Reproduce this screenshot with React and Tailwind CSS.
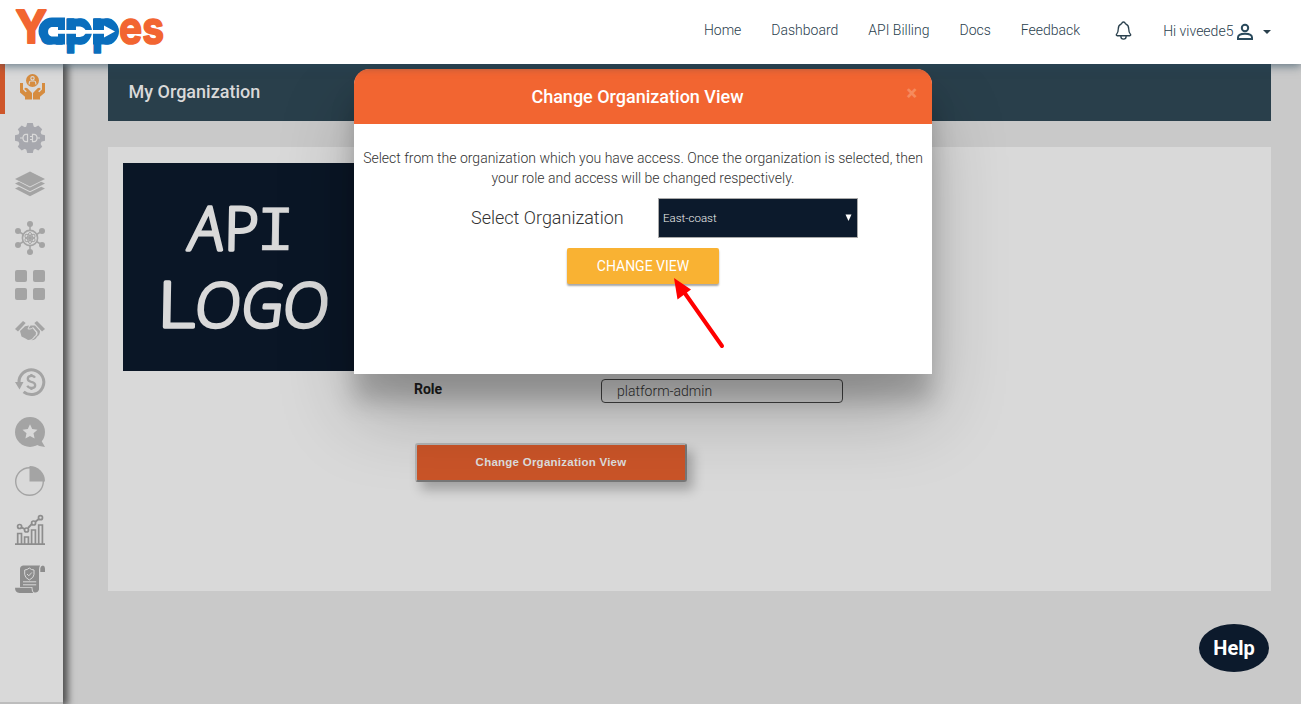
import React from "react";
import { IoNotificationsOutline } from "react-icons/io5";

const links = ["Home", "Dashboard", "API Billing", "Docs", "Feedback"];

function Logo() {
  return (
    <svg width="152" height="50" viewBox="14 6 152 50" className="overflow-visible" fontFamily="Inter, 'Liberation Sans', sans-serif" fontWeight="700">
      <g strokeLinejoin="round">
        <text x="15.5" y="43" fontSize="45.5" fill="#f26531" stroke="#f26531" strokeWidth="2" textLength="31.5" lengthAdjust="spacingAndGlyphs">Y</text>
        <text x="40" y="44" fontSize="46" fill="#0a6ebd" stroke="#0a6ebd" strokeWidth="1.6" textLength="78.5" lengthAdjust="spacingAndGlyphs">app</text>
        <text x="119" y="43.5" fontSize="46" fill="#f26531" stroke="#f26531" strokeWidth="1.6" textLength="45" lengthAdjust="spacingAndGlyphs">es</text>
      </g>
      <g fill="#0a6ebd">
        <path d="M52 17.5H65V44.5H52A13.5 13.5 0 0 1 52 17.5Z" />
        <path d="M66.5 18.5H79A12.8 12.8 0 0 1 79 44.5H66.5Z" />
        <path d="M93 18.5H106A13 13 0 0 1 106 44.5H93Z" />
      </g>
      <path d="M65.6 17V28M65.6 35V46" stroke="#fff" strokeWidth="0.6" />
      <path d="M58 30V27H51.5A5 5 0 0 0 51.5 36.5H58V33.7H76V37H80Q84 36.5 85.5 33.7H104V37.5L115 31.5L104 25.5V30H85.5Q84 27 80 26.5H76V30Z" fill="#fff" />
    </svg>
  );
}

function Icon({ className = "", children }) {
  return (
    <svg width="30" height="34" viewBox="0 0 30 34" className={`shrink-0 overflow-visible ${className}`} fill="currentColor">
      {children}
    </svg>
  );
}

const bg = "#d9d9d9";

function Sidebar() {
  return (
    <aside className="relative z-10 flex w-[63px] shrink-0 flex-col border-b-2 border-[#bdbdbd] bg-[#d9d9d9] shadow-[3px_0_7px_2px_rgba(0,0,0,0.6)]">
      <div className="flex h-[50px]">
        <div className="w-[5px] bg-[#ce562a]" />
        <div className="pt-1.5 pl-2.5 text-[#d68c3f]">
          <Icon>
            <circle cx="17.5" cy="10.5" r="6.5" />
            <circle cx="17.5" cy="8.3" r="1.7" fill="none" stroke={bg} strokeWidth="1.1" />
            <path d="M14.2 14.6V13Q14.2 11 16 11H19Q20.8 11 20.8 13V14.6" fill="none" stroke={bg} strokeWidth="1.1" />
            <path d="M5 13H8V19.5L10.7 22.3L11.8 21.3L9.2 18.9Q10.4 17 12.4 18.2L17 23V29.5H10V26.8L5 22.4Z" />
            <path d="M30 13H27V19.5L24.3 22.3L23.2 21.3L25.8 18.9Q24.6 17 22.6 18.2L18 23V29.5H25V26.8L30 22.4Z" />
          </Icon>
        </div>
      </div>
      <nav className="flex flex-col pt-[7px] pl-[15px] text-[#a4a4a4]">
        <Icon className="text-[#a7a8ae]">
          <circle cx="15" cy="17" r="12" />
          <path d="M12.2 2h5.6l1.3 5h-8.2zM12.2 32h5.6l1.3-5h-8.2zM0 14.2v5.6l5 1.3v-8.2zM30 14.2v5.6l-5 1.3v-8.2zM2.8 8.3l3.9-3.9 4.5 2.6-5.8 5.8zM27.2 8.3l-3.9-3.9-4.5 2.6 5.8 5.8zM2.8 25.7l3.9 3.9 4.5-2.6-5.8-5.8zM27.2 25.7l-3.9 3.9-4.5-2.6 5.8-5.8z" />
          <path d="M5 17h3M12.5 13.3h-1.5Q8 13.5 8 17t3 3.7h1.5zM17.5 13.3h1.5Q22 13.5 22 17t-3 3.7h-1.5zM15 15.5h2.5M15 18.5h2.5M22 17h3" fill="none" stroke={bg} strokeWidth="1.2" />
        </Icon>
        <Icon className="mt-3">
          <path d="M15 4.5L30 12L15 19.5L0 12Z" />
          <path d="M0 16.5L3.8 14.8L15 20.5L26.2 14.8L30 16.5L15 24.2Z" />
          <path d="M0 21.5L3.8 19.7L15 25.3L26.2 19.7L30 21.5L15 29.3Z" />
        </Icon>
        <Icon className="mt-5">
          <g fill="none" stroke="currentColor">
            <circle cx="15" cy="17" r="7.6" strokeWidth="1.6" />
            <path d="M15 5V9M15 25V29M4.5 11L8.5 13.5M21.5 20.5L25.5 23M4.5 23L8.5 20.5M21.5 13.5L25.5 11" strokeWidth="1.5" />
            <ellipse cx="15" cy="17" rx="2.4" ry="5.6" />
            <ellipse cx="15" cy="17" rx="2.4" ry="5.6" transform="rotate(60 15 17)" />
            <ellipse cx="15" cy="17" rx="2.4" ry="5.6" transform="rotate(120 15 17)" />
          </g>
          <circle cx="15" cy="17" r="2" />
          <circle cx="15" cy="3" r="3" /><circle cx="15" cy="31" r="3" />
          <circle cx="3" cy="10" r="3" /><circle cx="27" cy="10" r="3" />
          <circle cx="3" cy="24" r="3" /><circle cx="27" cy="24" r="3" />
        </Icon>
        <Icon className="mt-[13px]">
          <rect x="0" y="2" width="12" height="12" rx="2" /><rect x="18" y="2" width="12" height="12" rx="2" />
          <rect x="0" y="20" width="12" height="12" rx="2" /><rect x="18" y="20" width="12" height="12" rx="2" />
        </Icon>
        <Icon className="mt-3">
          <path d="M0 15L8 7L10.7 9L3 17.5Z" />
          <path d="M30 15L22 7L19.3 9L27 17.5Z" />
          <path d="M5 17L10 12.3L14 11.5L12.5 15Q15.5 16.5 17.5 14.3L21 18.5Q21.5 21 19 22.5Q17 26 13 26L10.5 24.5L6.5 22.5Z" />
          <path d="M13.5 14.3L15.5 11.5H20L25 17Q25 21 22 22.7Q20.5 25.8 16.5 26.2Q19.4 24.7 20.3 22.8Q23.5 20.8 22.3 17.8L18 13Q16 15.3 13.5 14.3Z" />
        </Icon>
        <Icon className="mt-[17px]">
          <path d="M4 18A12.4 12.4 0 1 1 8.6 26.8" fill="none" stroke="currentColor" strokeWidth="3" />
          <path d="M0 17H8.5L4.5 24.5Z" />
          <path d="M20 12.6Q19 10.9 16.3 10.9Q12.8 10.9 12.8 13.7Q12.8 16 16.3 16.8Q20.2 17.6 20.2 20.2Q20.2 23 16.5 23Q13.5 23 12.3 20.8M16.4 9V11.5M16.4 22.6V25" fill="none" stroke="currentColor" strokeWidth="2.3" />
        </Icon>
        <Icon className="mt-4">
          <circle cx="15" cy="17" r="15" />
          <path d="M20 29L26 25L30 32Q25 32 20 29Z" />
          <path d="M15 9.2L17.2 14.1L22.5 14.7L18.5 18.3L19.6 23.6L15 20.9L10.4 23.6L11.5 18.3L7.5 14.7L12.8 14.1Z" fill={bg} />
        </Icon>
        <Icon className="mt-[15px]">
          <circle cx="14.5" cy="17.5" r="13.8" fill="none" stroke="currentColor" strokeWidth="1.4" />
          <path d="M14.5 2A15 15 0 0 1 30 17.5H14.5Z" />
        </Icon>
        <Icon className="mt-[15px] text-[#8d8d8d]">
          <g fill="none" stroke="currentColor" strokeWidth="1.7">
            <path d="M0 31.2H30M2.7 31V20.5H6.5V31M9.6 31V24H13.4V31M16.6 31V17H20.4V31M23.7 31V12H27.4V31" />
            <path d="M6.3 14.3L9.7 16M13 15L16.7 11.2M20.4 8.7L23.8 6" strokeWidth="1.9" />
            <circle cx="4.6" cy="13.5" r="2" /><circle cx="11.5" cy="17" r="2" /><circle cx="18.6" cy="10" r="2" /><circle cx="25.5" cy="4.7" r="2" />
          </g>
        </Icon>
        <Icon className="mt-[15px] text-[#8d8d8d]">
          <path d="M8 3.5H25Q24 5 24 8V27.5Q23 31 19.5 30.5Q17.5 30 17.4 25H5V7Q5 4 8 3.5Z" />
          <path d="M25.3 10V6Q25.8 3.5 28 3.5Q30 4 30 6.5V10Z" />
          <path d="M0 25.8H16.5Q16.5 29.5 18.3 31H4.5Q0 30.6 0 25.8Z" />
          <path d="M14.3 6Q16.5 8 19 8V12.5Q19 15.5 14.3 18Q9.7 15.5 9.7 12.5V8Q12.2 8 14.3 6ZM12 12L13.8 13.8L16.8 10.5M8 19.8H21.2M8 22.8H21.2" fill="none" stroke={bg} strokeWidth="1" />
        </Icon>
      </nav>
    </aside>
  );
}

function ApiArtwork() {
  return (
    <svg width="262" height="208" viewBox="0 0 262 208" className="block bg-[#0a1626]" fontFamily="'Open Sans', sans-serif" fill="#d9d9d9" stroke="#d9d9d9" strokeWidth="3.4" strokeLinejoin="round" fontWeight="300">
      <text transform="translate(64 87) skewX(-7) scale(.96 1)" fontSize="60">A</text>
      <text transform="translate(101 87) skewX(-1) scale(.98 1)" fontSize="60">P</text>
      <text transform="translate(133 87) skewX(-1) scale(1.1 1)" fontFamily="'DejaVu Sans Mono', monospace" fontSize="58" strokeWidth="0.6">I</text>
      <text transform="translate(34.5 164) skewX(-1) scale(1.15 1)" fontSize="63">L</text>
      <text transform="translate(70 164) skewX(-7) scale(.98 1)" fontSize="61">O</text>
      <text transform="translate(116.5 164) skewX(-7) scale(.95 1)" fontSize="61">G</text>
      <text transform="translate(158 164) skewX(-7) scale(.98 1)" fontSize="61">O</text>
    </svg>
  );
}

function Modal() {
  return (
    <div className="absolute top-[69px] left-[354px] z-20 h-[305px] w-[578px] rounded-t-[16px] bg-white shadow-[0_27px_24px_0_rgba(0,0,0,0.2),0_40px_77px_0_rgba(0,0,0,0.22)]">
      <div className="relative flex h-[55px] items-center justify-center rounded-t-[15px] bg-[#f26531] pr-[11px] text-[18px] font-medium text-white">
        Change Organization View
        <span className="absolute top-[13px] right-[15px] text-[20px] leading-[22px] font-black text-[#f68a5d]">×</span>
      </div>
      <p className="pt-6 text-center text-[14px] leading-5 font-light text-[#333]">
        Select from the organization which you have access. Once the organization is selected, then<br />
        your role and access will be changed respectively.
      </p>
      <div className="mt-[10px] flex h-10 items-center pl-[117px]">
        <span className="w-[187px] pb-0.5 text-[18px] font-light text-[#333]">Select Organization</span>
        <div className="flex h-10 w-[200px] items-center justify-between border border-[#a9a9a9] bg-[#0c1a2c] pr-[5px] pl-1 text-[11.5px] font-light text-[#f0f0f0]">
          <span className="pt-0.5">East-coast</span>
          <svg width="7" height="7" viewBox="0 0 7 7" className="mb-0.5" fill="#fff"><path d="M.5 .5H6.5L3.5 7Z" /></svg>
        </div>
      </div>
      <div className="flex justify-center pt-[10px]">
        <button className="h-9 w-[152px] rounded-[2px] bg-[#f9b233] text-[14px] text-white shadow-[0_2px_2px_rgba(0,0,0,0.35)]">CHANGE VIEW</button>
      </div>
      <svg width="54" height="72" viewBox="0 0 54 72" className="absolute top-[208px] left-[319px]">
        <path d="M11 15L49 69" stroke="#f00" strokeWidth="4" strokeLinecap="round" />
        <path d="M1 1L18 12.5L4.5 22.5Z" fill="#f00" />
      </svg>
    </div>
  );
}

export default function App() {
  return (
    <div className="relative flex h-[704px] w-[1301px] flex-col overflow-hidden bg-[#c9c9c9] font-['Roboto',sans-serif]">
      <header className="relative z-30 flex h-16 shrink-0 items-center justify-between bg-white pr-[30px] pl-[14px] text-[#2a404d] shadow-[0_2px_9px_rgba(40,70,90,0.65)]">
        <div className="pb-[2px]"><Logo /></div>
        <div className="flex items-center pb-1 text-[14px] font-light">
          <nav className="flex gap-[30px]">
            {links.map((l) => <a key={l}>{l}</a>)}
          </nav>
          <IoNotificationsOutline className="ml-[33px] size-[21px]" />
          <span className="mt-0.5 ml-[29px]">Hi viveede5</span>
          <svg width="18" height="18" viewBox="0 0 18 18" className="mt-1 ml-[3px]" fill="none" stroke="#2a4a5c" strokeWidth="2">
            <circle cx="9" cy="5" r="3.2" />
            <path d="M2 16V14.5Q2 10.8 9 10.8T16 14.5V16Z" />
          </svg>
          <svg width="8" height="4" viewBox="0 0 8 4" className="mt-1 ml-[8.6px]" fill="#2a404d"><path d="M0 0H8L4 4Z" /></svg>
        </div>
      </header>
      <div className="flex min-h-0 flex-1">
        <Sidebar />
        <main className="flex-1 pr-[30px] pl-[45px]">
          <div className="flex h-[57px] items-center bg-[#293f4b] pl-[20.5px] text-[18px] font-medium text-[#d9d9d9]">
            <h1 className="pb-0.5">My Organization</h1>
          </div>
          <section className="mt-[26px] flex h-[444px] bg-[#d9d9d9] pt-4 pl-[15px]">
            <ApiArtwork />
            <div className="flex flex-col items-start pt-[216px] pl-[29px]">
              <div className="flex h-6">
                <span className="w-[187px] text-[14px] leading-5 font-bold text-[#212121]">Role</span>
                <div className="h-6 w-[242px] rounded-[4px] border border-[#444] pl-[15px] text-[14px] leading-[23px] font-light text-[#333]">platform-admin</div>
              </div>
              <button className="mt-10 ml-px h-[39px] w-[272px] rounded-[3px] border-2 border-t-[#b3b3b3] border-r-[#777] border-b-[#777] border-l-[#b3b3b3] bg-[#ca5428] font-['Liberation_Sans',Arial,sans-serif] text-[11.5px] tracking-[0.25px] font-bold text-[#dedede] shadow-[6px_8px_12px_rgba(0,0,0,0.25)]">Change Organization View</button>
            </div>
          </section>
        </main>
      </div>
      <Modal />
      <div className="absolute top-[624px] left-[1199px] z-20 flex h-12 w-[70px] items-center justify-center rounded-[50%] bg-[#0c1a2c] text-[20px] font-bold text-white">Help</div>
    </div>
  );
}
